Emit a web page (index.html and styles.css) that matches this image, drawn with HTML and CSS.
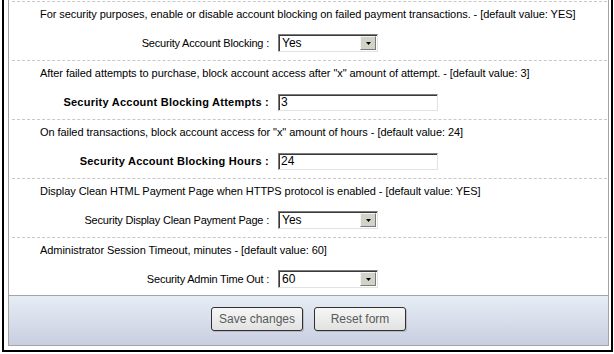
FILE: index.html
```html
<!DOCTYPE html>
<html lang="en">
<head>
<meta charset="UTF-8" />
<title>Security Settings</title>
<link rel="stylesheet" href="styles.css">
</head>
<body>

  <div class="frame">
    <form class="panel" onsubmit="return false;">
      <div class="rows">

        <div class="row">
          <p class="hint">For security purposes, enable or disable account blocking on failed payment transactions. - [default value: YES]</p>
          <div class="field">
            <label class="label" for="blocking">Security Account Blocking :</label>
            <span class="combo">
              <select id="blocking"><option>Yes</option><option>No</option></select>
              <span class="combo-btn"><svg width="5" height="3" viewBox="0 0 5 3"><path d="M0 0h5L2.5 3z" fill="#000"/></svg></span>
            </span>
          </div>
        </div>

        <div class="row">
          <p class="hint">After failed attempts to purchase, block account access after "x" amount of attempt. - [default value: 3]</p>
          <div class="field">
            <label class="label strong" for="attempts">Security Account Blocking Attempts :</label>
            <input id="attempts" class="text" type="text" value="3" />
          </div>
        </div>

        <div class="row">
          <p class="hint">On failed transactions, block account access for "x" amount of hours - [default value: 24]</p>
          <div class="field">
            <label class="label strong" for="hours">Security Account Blocking Hours :</label>
            <input id="hours" class="text" type="text" value="24" />
          </div>
        </div>

        <div class="row">
          <p class="hint">Display Clean HTML Payment Page when HTTPS protocol is enabled - [default value: YES]</p>
          <div class="field">
            <label class="label" for="clean">Security Display Clean Payment Page :</label>
            <span class="combo">
              <select id="clean"><option>Yes</option><option>No</option></select>
              <span class="combo-btn"><svg width="5" height="3" viewBox="0 0 5 3"><path d="M0 0h5L2.5 3z" fill="#000"/></svg></span>
            </span>
          </div>
        </div>

        <div class="row last">
          <p class="hint">Administrator Session Timeout, minutes - [default value: 60]</p>
          <div class="field">
            <label class="label" for="timeout">Security Admin Time Out :</label>
            <span class="combo">
              <select id="timeout"><option>60</option><option>30</option><option>120</option></select>
              <span class="combo-btn"><svg width="5" height="3" viewBox="0 0 5 3"><path d="M0 0h5L2.5 3z" fill="#000"/></svg></span>
            </span>
          </div>
        </div>

      </div>

      <div class="actions">
        <button type="submit" class="btn">Save changes</button>
        <button type="reset" class="btn">Reset form</button>
      </div>
    </form>
  </div>

</body>
</html>
```

FILE: styles.css
```css
/* BASE */
* {
  box-sizing: border-box;
}
html, body {
  margin: 0;
  padding: 0;
  background: #fff;
  color: #000;
  font-family: "Liberation Sans", Arial, sans-serif;
  font-size: 11px;
}

/* MARCO EXTERIOR */
.frame {
  margin: 0 1px 0 2px;
  border: 2px solid #000;
  border-top: none;
  padding: 0 2px 4px 4px;
}

.panel {
  margin: 0;
  border: 1px solid #a4a4a4;
  border-top: none;
}

/* FILAS */
.rows {
  padding: 1px 1px 0 3px;
}

.row {
  border-top: 1px dashed #c8c8c8;
  height: 59px;
  padding: 5px 0 0 0;
}
.row.last {
  height: 58px;
}

.hint {
  margin: 0 0 0 28px;
  line-height: 14px;
  white-space: nowrap;
  letter-spacing: -0.06px;
}

.field {
  display: grid;
  grid-template-columns: 257px auto;
  column-gap: 9px;
  align-items: center;
  margin-top: 13px;
  height: 18px;
}

.label {
  text-align: right;
  white-space: nowrap;
  letter-spacing: -0.2px;
}
.label.strong {
  font-weight: bold;
  letter-spacing: 0.25px;
}

/* CONTROLES */
.text {
  width: 160px;
  height: 17px;
  margin: 0;
  padding: 0 2px;
  font: 12px "Liberation Sans", Arial, sans-serif;
  color: #000;
  background: #fff;
  border: 1px solid;
  border-color: #7c7c7c #e2e2e2 #e2e2e2 #7c7c7c;
  box-shadow: inset 1px 1px 0 #3a3a3a;
  outline: none;
}

.combo {
  position: relative;
  display: inline-block;
  width: 100px;
  height: 18px;
}
.combo select {
  appearance: none;
  -webkit-appearance: none;
  width: 100px;
  height: 18px;
  margin: 0;
  padding: 0 0 0 3px;
  font: 12px "Liberation Sans", Arial, sans-serif;
  color: #000;
  background: #fff;
  border: 1px solid;
  border-color: #7c7c7c #e2e2e2 #e2e2e2 #7c7c7c;
  box-shadow: inset 1px 1px 0 #3a3a3a;
  border-radius: 0;
  outline: none;
}
.combo-btn {
  position: absolute;
  top: 2px;
  right: 2px;
  width: 16px;
  height: 14px;
  display: flex;
  align-items: center;
  justify-content: center;
  background: #d2d2c8;
  border: 1px solid;
  border-color: #f4f4f4 #7a7a7a #7a7a7a #f4f4f4;
  pointer-events: none;
}

/* PIE CON BOTONES */
.actions {
  border-top: 1px solid #a4a4a4;
  height: 50px;
  padding-top: 11px;
  display: flex;
  justify-content: center;
  gap: 11px;
  background: linear-gradient(#e6edf5, #cacee0);
}

.btn {
  width: 92px;
  height: 24px;
  margin: 0;
  padding: 0;
  font: 12px "Liberation Sans", Arial, sans-serif;
  color: #5a5a5a;
  background: linear-gradient(#f6f6f6, #e2e2e2);
  border: 1px solid #303030;
  border-radius: 3px;
  box-shadow: 1px 1px 0 rgba(0,0,0,0.15);
  cursor: pointer;
}
.btn:hover {
  background: linear-gradient(#fff, #ebebeb);
}
```
